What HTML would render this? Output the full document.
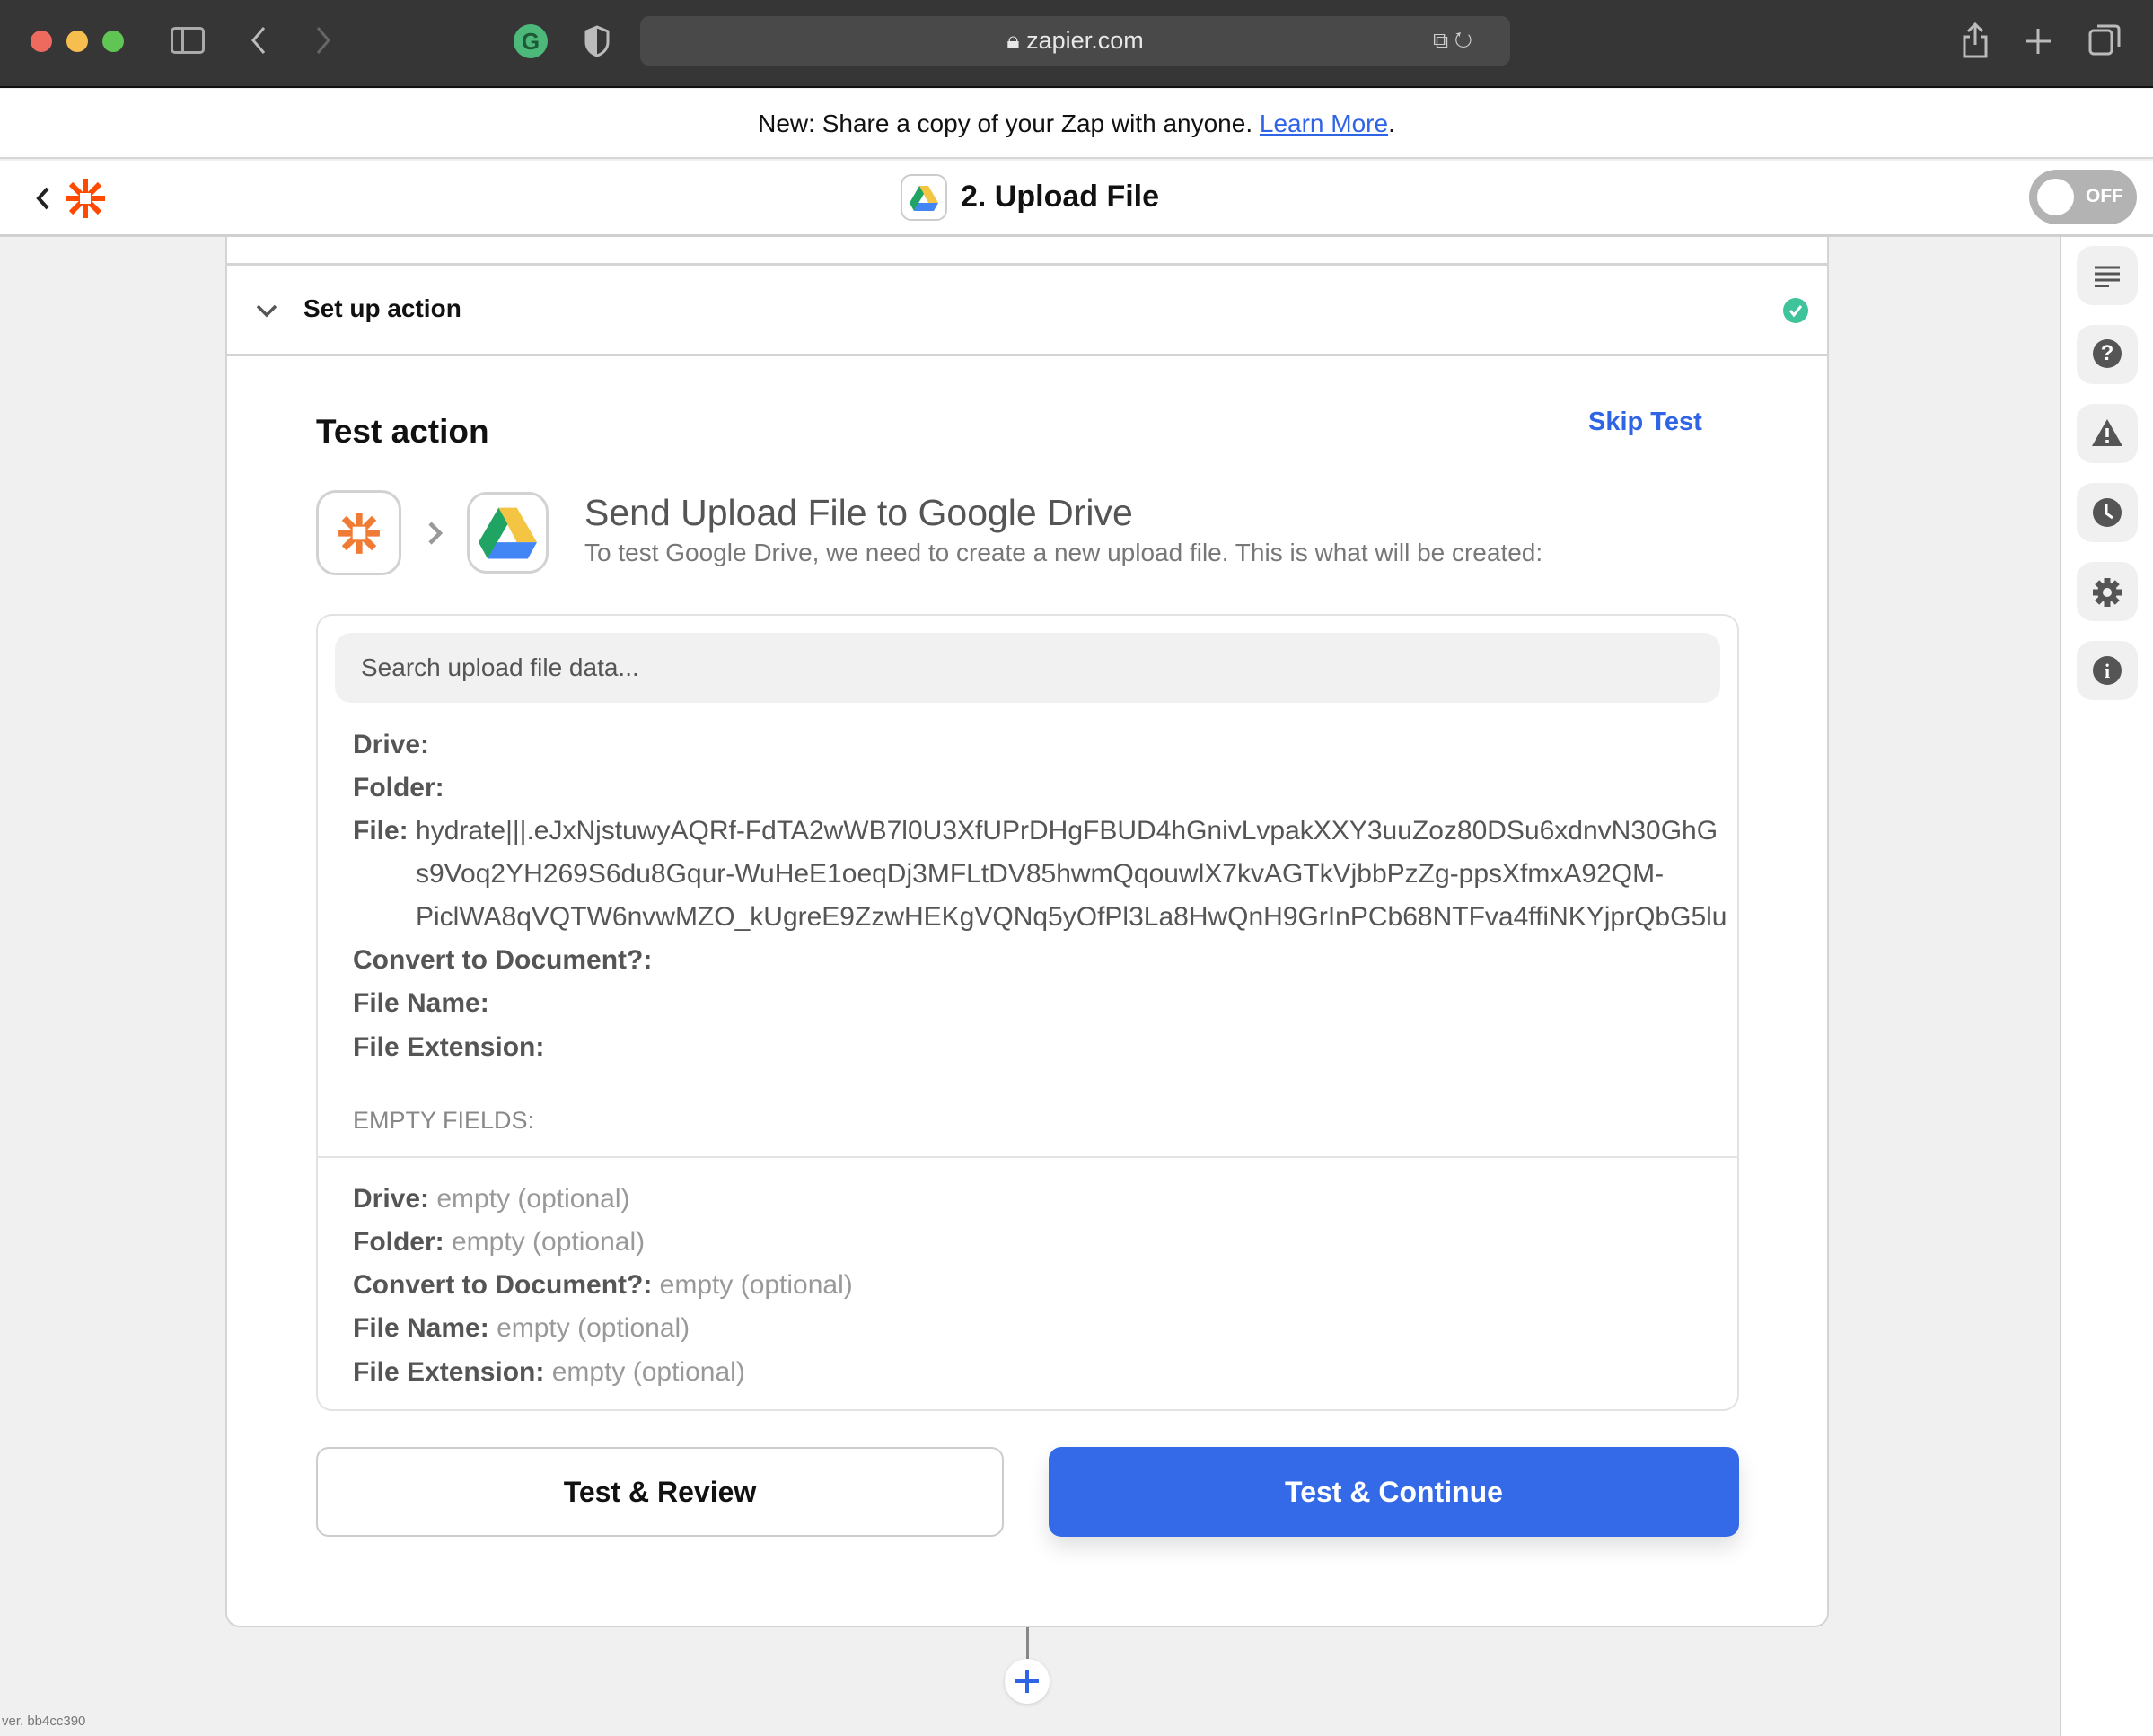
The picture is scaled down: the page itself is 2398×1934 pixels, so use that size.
<!DOCTYPE html>
<html><head><meta charset="utf-8"><style>
*{margin:0;padding:0;box-sizing:border-box}
body{width:2398px;height:1934px;overflow:hidden;font-family:"Liberation Sans",sans-serif;background:#f0f0f0;position:relative}
.a{position:absolute}
.top{left:0;top:0;width:2398px;height:98px;background:#363636;border-bottom:2px solid #111}
.dot{width:24px;height:24px;border-radius:50%;top:34px}
.url{left:713px;top:18px;width:969px;height:55px;background:#494949;border-radius:10px;color:#e8e8e8;font-size:27px;text-align:center;line-height:55px}
.banner{left:0;top:99px;width:2398px;height:78px;background:#fff;border-bottom:2px solid #d6d6d6;text-align:center;font-size:28px;line-height:78px;color:#111}
.banner span{color:#2f64e6;text-decoration:underline}
.hdr{left:0;top:179px;width:2398px;height:85px;background:#fff;border-bottom:3px solid #d0d0d0}
.side{left:2294px;top:264px;width:104px;height:1670px;background:#fff;border-left:2px solid #d0d0d0}
.sb{left:2313px;width:68px;height:66px;background:#f0f0f0;border-radius:18px}
.card{left:251px;top:264px;width:1786px;height:1549px;background:#fff;border:2px solid #d4d4d4;border-top:none;border-radius:0 0 16px 16px}
.lbl{font-weight:bold;color:#555;font-size:30px;left:393px;white-space:nowrap}
.v{font-weight:normal;color:#555}
.e{font-weight:normal;color:#999}
.fv{left:463px;font-size:30px;color:#555;white-space:nowrap;width:1472px;overflow:hidden}
</style></head><body>
<div class="a top"></div>
<div class="a dot" style="left:34px;background:#ee6a5f"></div>
<div class="a dot" style="left:74px;background:#f5be4f"></div>
<div class="a dot" style="left:114px;background:#61c554"></div>
<div class="a" style="left:190px;top:30px;width:38px;height:30px;border:3px solid #aaa;border-radius:5px"><div style="position:absolute;left:9px;top:0;width:3px;height:24px;background:#aaa"></div></div>
<svg class="a" style="left:276px;top:28px" width="24" height="34"><path d="M18 3 L6 17 L18 31" stroke="#bbb" stroke-width="3" fill="none"/></svg>
<svg class="a" style="left:348px;top:28px" width="24" height="34"><path d="M6 3 L18 17 L6 31" stroke="#666" stroke-width="3" fill="none"/></svg>
<div class="a" style="left:572px;top:27px;width:38px;height:38px;border-radius:50%;background:#4cb97a;color:#1e5a36;font-weight:bold;font-size:26px;text-align:center;line-height:38px">G</div>
<svg class="a" style="left:650px;top:28px" width="30" height="36"><path d="M15 2 L27 7 V19 C27 27 21 32 15 34 C9 32 3 27 3 19 V7 Z" fill="none" stroke="#bbb" stroke-width="3"/><path d="M15 2 L3 7 V19 C3 27 9 32 15 34Z" fill="#bbb"/></svg>
<div class="a url">🔒︎ zapier.com</div>
<div class="a" style="left:1596px;top:32px;color:#ccc;font-size:24px">⧉ ↻</div>
<svg class="a" style="left:2184px;top:24px" width="32" height="42"><path d="M16 3 V26 M8 11 L16 3 L24 11 M10 17 H4 V39 H28 V17 H22" stroke="#bbb" stroke-width="3" fill="none"/></svg>
<svg class="a" style="left:2254px;top:30px" width="32" height="32"><path d="M16 2 V30 M2 16 H30" stroke="#bbb" stroke-width="3"/></svg>
<svg class="a" style="left:2326px;top:26px" width="36" height="38"><rect x="2" y="8" width="24" height="26" rx="4" fill="none" stroke="#bbb" stroke-width="3"/><path d="M10 3 H30 Q34 3 34 7 V26" fill="none" stroke="#bbb" stroke-width="3"/></svg>

<div class="a banner">New: Share a copy of your Zap with anyone. <span>Learn More</span>.</div>
<div class="a hdr"></div>
<svg class="a" style="left:38px;top:207px" width="20" height="28"><path d="M15 3 L5 14 L15 25" stroke="#222" stroke-width="4" fill="none"/></svg>
<svg class="a" style="left:71px;top:197px" width="48" height="48" viewBox="0 0 48 48"><g stroke="#ff4a00" stroke-width="6"><path d="M24 2V46M2 24H46M8 8L40 40M40 8L8 40"/></g><rect x="18" y="18" width="12" height="12" fill="#fff"/></svg>
<div class="a" style="left:1003px;top:194px;width:52px;height:52px;border:2px solid #ccc;border-radius:12px;background:#fff"></div>
<svg class="a" style="left:1013px;top:207px" width="32" height="28" viewBox="0 0 32 28"><path d="M11 0 H21 L32 19 H21Z" fill="#f4c542"/><path d="M11 0 L0 19 L5 28 L16 9Z" fill="#1fa463"/><path d="M5 28 H27 L32 19 H10Z" fill="#4285f4"/></svg>
<div class="a" style="left:1070px;top:200px;font-size:34px;font-weight:bold;color:#111">2. Upload File</div>
<div class="a" style="left:2260px;top:189px;width:120px;height:61px;border-radius:31px;background:#b3b3b3"></div>
<div class="a" style="left:2269px;top:199px;width:41px;height:41px;border-radius:50%;background:#fff"></div>
<div class="a" style="left:2323px;top:207px;font-size:21px;font-weight:bold;color:#fff">OFF</div>

<div class="a side"></div>
<div class="a sb" style="top:274px"></div>
<div class="a sb" style="top:362px"></div>
<div class="a sb" style="top:450px"></div>
<div class="a sb" style="top:538px"></div>
<div class="a sb" style="top:626px"></div>
<div class="a sb" style="top:714px"></div>
<svg class="a" style="left:2333px;top:296px" width="28" height="24"><path d="M0 2H28M0 9H28M0 16H28M0 23H16" stroke="#555" stroke-width="3"/></svg>
<div class="a" style="left:2331px;top:378px;width:32px;height:32px;border-radius:50%;background:#555;color:#fff;font-weight:bold;font-size:24px;text-align:center;line-height:32px">?</div>
<svg class="a" style="left:2329px;top:466px" width="36" height="32"><path d="M18 1 L35 31 H1Z" fill="#555"/><path d="M18 11V21M18 24V28" stroke="#fff" stroke-width="3.5"/></svg>
<svg class="a" style="left:2331px;top:555px" width="32" height="32"><circle cx="16" cy="16" r="16" fill="#555"/><path d="M15 7V17L22 22" stroke="#fff" stroke-width="3" fill="none"/></svg>
<svg class="a" style="left:2329px;top:642px" width="36" height="36" viewBox="0 0 36 36"><g stroke="#555" stroke-width="7"><path d="M18 2V34M2 18H34M6.7 6.7L29.3 29.3M29.3 6.7L6.7 29.3"/></g><circle cx="18" cy="18" r="11" fill="#555"/><circle cx="18" cy="18" r="5" fill="#f0f0f0"/></svg>
<div class="a" style="left:2331px;top:731px;width:32px;height:32px;border-radius:50%;background:#555;color:#fff;font-weight:bold;font-size:22px;text-align:center;line-height:33px;font-family:'Liberation Serif',serif">i</div>

<div class="a card"></div>
<div class="a" style="left:251px;top:293px;width:1786px;height:3px;background:#d4d4d4"></div>
<div class="a" style="left:251px;top:394px;width:1786px;height:3px;background:#d4d4d4"></div>
<svg class="a" style="left:284px;top:337px" width="26" height="18"><path d="M3 4 L13 14 L23 4" stroke="#555" stroke-width="3.5" fill="none"/></svg>
<div class="a" style="left:338px;top:328px;font-size:28px;font-weight:bold;color:#111">Set up action</div>
<svg class="a" style="left:1986px;top:332px" width="28" height="28"><circle cx="14" cy="14" r="14" fill="#3fc39a"/><path d="M8 14 L12 19 L20 9" stroke="#fff" stroke-width="3" fill="none"/></svg>

<div class="a" style="left:352px;top:460px;font-size:37px;font-weight:bold;color:#111">Test action</div>
<div class="a" style="left:1769px;top:454px;font-size:29px;font-weight:bold;color:#2f64e6">Skip Test</div>

<div class="a" style="left:352px;top:546px;width:95px;height:95px;border:3px solid #d2d2d2;border-radius:22px;background:#fff"></div>
<svg class="a" style="left:375px;top:569px" width="50" height="50" viewBox="0 0 48 48"><g stroke="#f07b34" stroke-width="7"><path d="M24 2V46M2 24H46M8 8L40 40M40 8L8 40"/></g><rect x="17" y="17" width="14" height="14" fill="#fff"/></svg>
<svg class="a" style="left:475px;top:580px" width="20" height="28"><path d="M4 3 L15 14 L4 25" stroke="#999" stroke-width="4.5" fill="none"/></svg>
<div class="a" style="left:520px;top:548px;width:91px;height:91px;border:3px solid #d2d2d2;border-radius:22px;background:#fff"></div>
<svg class="a" style="left:533px;top:565px" width="65" height="58" viewBox="0 0 32 28"><path d="M11 0 H21 L32 19 H21Z" fill="#f4c542"/><path d="M11 0 L0 19 L5 28 L16 9Z" fill="#1fa463"/><path d="M5 28 H27 L32 19 H10Z" fill="#4285f4"/></svg>
<div class="a" style="left:651px;top:548px;font-size:41px;color:#555">Send Upload File to Google Drive</div>
<div class="a" style="left:651px;top:600px;font-size:28px;color:#777">To test Google Drive, we need to create a new upload file. This is what will be created:</div>

<div class="a" style="left:352px;top:684px;width:1585px;height:888px;border:2px solid #e2e2e2;border-radius:18px;background:#fff"></div>
<div class="a" style="left:373px;top:705px;width:1543px;height:78px;background:#f1f1f1;border-radius:18px;font-size:28px;color:#555;line-height:78px;padding-left:29px">Search upload file data...</div>

<div class="a lbl" style="top:813px">Drive:</div>
<div class="a lbl" style="top:861px">Folder:</div>
<div class="a lbl" style="top:909px;width:1542px;overflow:hidden">File: <span class="v">hydrate|||.eJxNjstuwyAQRf-FdTA2wWB7l0U3XfUPrDHgFBUD4hGnivLvpakXXY3uuZoz80DSu6xdnvN30GhG</span></div>
<div class="a fv" style="top:957px">s9Voq2YH269S6du8Gqur-WuHeE1oeqDj3MFLtDV85hwmQqouwlX7kvAGTkVjbbPzZg-ppsXfmxA92QM-</div>
<div class="a fv" style="top:1005px">PiclWA8qVQTW6nvwMZO_kUgreE9ZzwHEKgVQNq5yOfPl3La8HwQnH9GrInPCb68NTFva4ffiNKYjprQbG5lu</div>
<div class="a lbl" style="top:1053px">Convert to Document?:</div>
<div class="a lbl" style="top:1101px">File Name:</div>
<div class="a lbl" style="top:1150px">File Extension:</div>
<div class="a" style="left:393px;top:1233px;font-size:27px;color:#888">EMPTY FIELDS:</div>
<div class="a" style="left:353px;top:1288px;width:1583px;height:2px;background:#e4e4e4"></div>
<div class="a lbl" style="top:1319px">Drive: <span class="e">empty (optional)</span></div>
<div class="a lbl" style="top:1367px">Folder: <span class="e">empty (optional)</span></div>
<div class="a lbl" style="top:1415px">Convert to Document?: <span class="e">empty (optional)</span></div>
<div class="a lbl" style="top:1463px">File Name: <span class="e">empty (optional)</span></div>
<div class="a lbl" style="top:1512px">File Extension: <span class="e">empty (optional)</span></div>

<div class="a" style="left:352px;top:1612px;width:766px;height:100px;border:2px solid #ccc;border-radius:14px;background:#fff;text-align:center;line-height:96px;font-size:32px;font-weight:bold;color:#111">Test &amp; Review</div>
<div class="a" style="left:1168px;top:1612px;width:769px;height:100px;border-radius:14px;background:#3469e8;text-align:center;line-height:100px;font-size:32px;font-weight:bold;color:#fff;box-shadow:0 12px 24px rgba(0,0,0,0.12)">Test &amp; Continue</div>

<div class="a" style="left:1143px;top:1813px;width:3px;height:36px;background:#888"></div>
<div class="a" style="left:1119px;top:1848px;width:50px;height:50px;border-radius:50%;background:#fff;box-shadow:0 1px 4px rgba(0,0,0,.15)"></div>
<svg class="a" style="left:1128px;top:1857px" width="32" height="32"><path d="M16 3V29M3 16H29" stroke="#2f64e6" stroke-width="4"/></svg>
<div class="a" style="left:2px;top:1909px;font-size:15px;color:#777">ver. bb4cc390</div>
</body></html>
